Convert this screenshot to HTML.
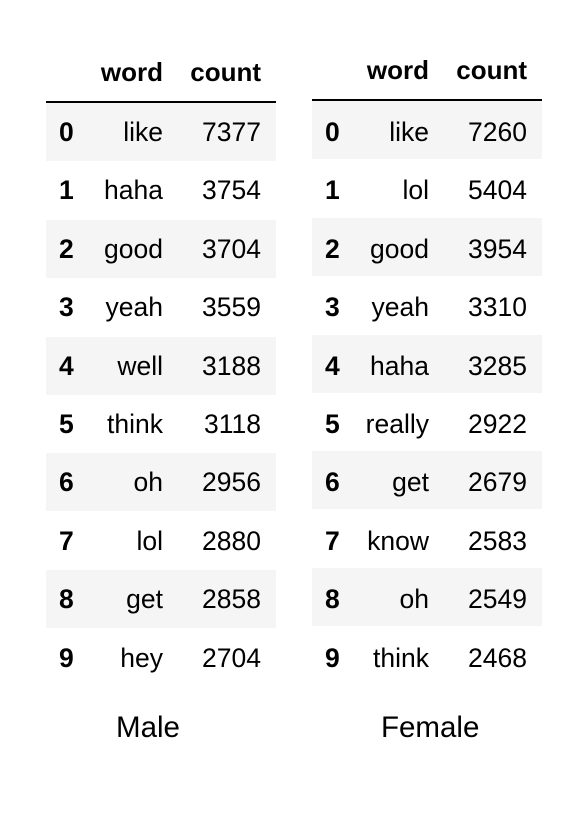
<html><head><style>
body{margin:0;width:574px;height:824px;background:#fff;font-family:"Liberation Sans",Arial,sans-serif;position:relative;overflow:hidden;color:#000}
.t{position:absolute;width:230px}
.h{position:absolute;font-weight:bold;font-size:26px;top:0;height:30px;line-height:30px}
.line{position:absolute;left:0;width:230px;height:2px;background:#000}
.r{position:absolute;left:0;width:230px;height:58px;font-size:26.5px;line-height:58px}
.r.g{background:#f5f5f5}
.r span{position:absolute;top:0}
.i{left:13px;font-weight:bold}
.w{right:113px}
.c{right:15px}
.lab{position:absolute;font-size:29.5px;top:711px}
</style></head><body>
<div class="t" style="left:46px;top:57px" id="L"></div>
<div class="t" style="left:312px;top:55px" id="R"></div>
<div class="lab" style="left:116px">Male</div>
<div class="lab" style="left:381px">Female</div>
<script>
function build(id,data,off){var el=document.getElementById(id);var h='<div class="h" style="right:113px">word</div><div class="h" style="right:15px">count</div><div class="line" style="top:44px"></div>';
data.forEach(function(d,k){h+='<div class="r'+(k%2==0?' g':'')+'" style="top:'+(46+k*58.4)+'px"><span class="i" style="top:'+off+'px">'+k+'</span><span class="w" style="top:'+off+'px">'+d[0]+'</span><span class="c" style="top:'+off+'px">'+d[1]+'</span></div>';});
el.innerHTML=h;}
build('L',[["like",7377],["haha",3754],["good",3704],["yeah",3559],["well",3188],["think",3118],["oh",2956],["lol",2880],["get",2858],["hey",2704]],0);
build('R',[["like",7260],["lol",5404],["good",3954],["yeah",3310],["haha",3285],["really",2922],["get",2679],["know",2583],["oh",2549],["think",2468]],2);
</script>
</body></html>
